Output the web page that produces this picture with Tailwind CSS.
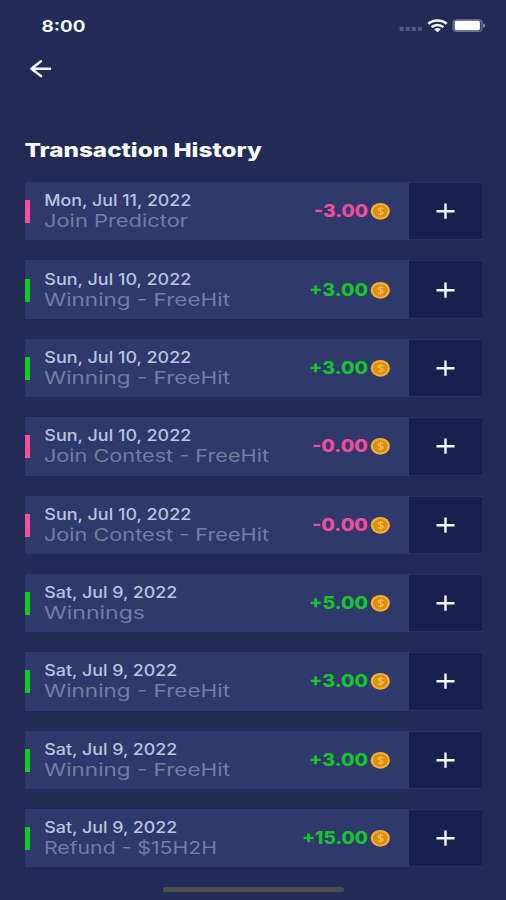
<!DOCTYPE html>
<html lang="en">
<head>
<meta charset="utf-8">
<title>Transaction History</title>
<script src="https://cdn.jsdelivr.net/npm/@tailwindcss/browser@4"></script>
</head>
<body class="bg-[#232a56] font-['Inter',sans-serif]">
<main class="flex h-[900px] w-[506px] flex-col overflow-hidden bg-[#232a56]">
  <header class="flex h-[50px] shrink-0 items-start justify-between pt-[14px] pr-[20px] pl-[41px]">
    <svg class="h-6 w-12 overflow-visible" fill="#f4f5fb"><text x="0.5" y="17.5" font-size="16" font-weight="700" textLength="44" lengthAdjust="spacingAndGlyphs">8:00</text></svg>
    <div class="flex h-6 items-center">
      <svg class="mt-[6px] h-1.5 w-6" viewBox="0 0 24 6" fill="#50567f"><rect x="0.5" y="0.8" width="4.2" height="4.2" rx="1"/><rect x="6.6" y="0.8" width="4.2" height="4.2" rx="1"/><rect x="12.7" y="0.8" width="4.2" height="4.2" rx="1"/><rect x="18.8" y="0.8" width="4.2" height="4.2" rx="1"/></svg>
      <svg class="ml-[4px] h-[14px] w-[21px]" viewBox="0 0 21 14" fill="none" stroke="#f6f7fd" stroke-width="2.6"><path d="M1.3 4.8C6.2.4 14.8.4 19.7 4.8"/><path d="M4.6 8.1C7.8 5.2 13.2 5.2 16.4 8.1"/><path d="M7.2 10.2Q10.5 8 13.8 10.2L10.5 13.3Z" fill="#f6f7fd" stroke="none"/></svg>
      <svg class="ml-[4px] h-[14px] w-[34px]" viewBox="0 0 34 14"><rect x="1" y="0.8" width="29" height="11.6" rx="3.5" fill="#3b4169" stroke="#6d7297" stroke-width="1.2"/><rect x="2.7" y="1.8" width="25.2" height="9.4" rx="1.8" fill="#fff"/><path d="M31.3 4.4Q33.2 5.2 33.2 6.6T31.3 8.8Z" fill="#9a9eb9"/></svg>
    </div>
  </header>
  <nav class="flex h-[38px] shrink-0 items-center pl-[29px]">
    <svg class="h-[20px] w-[24px]" viewBox="0 0 24 20" fill="none" stroke="#f6f7fd" stroke-width="2.5" stroke-linecap="round" stroke-linejoin="round"><path d="M12 2.3L2.3 9.8L12 17.1M2.8 9.8H21"/></svg>
  </nav>
  <h1 class="mt-[48px] flex h-[46px] shrink-0 pl-[25px]">
    <svg class="h-[30px] w-[240px] overflow-visible" fill="#fff"><text x="-0.5" y="21.2" font-size="19" font-weight="800" textLength="237.5" lengthAdjust="spacingAndGlyphs">Transaction History</text></svg>
  </h1>
  <section id="list" class="flex h-[686px] shrink-0 flex-col gap-[20px] pr-[24px] pl-[25px]"></section>
  <footer class="flex grow justify-center pt-[19px]"><div class="h-[5px] w-[181px] rounded-full bg-[#4d4d50]"></div></footer>
</main>
<script>
// date, date width, description, description width, amount, amount width
const rows = [
  ['Mon, Jul 11, 2022', 147, 'Join Predictor', 144, '-3.00', 54],
  ['Sun, Jul 10, 2022', 147, 'Winning - FreeHit', 186, '+3.00', 59],
  ['Sun, Jul 10, 2022', 147, 'Winning - FreeHit', 186, '+3.00', 59],
  ['Sun, Jul 10, 2022', 147, 'Join Contest - FreeHit', 225, '-0.00', 56],
  ['Sun, Jul 10, 2022', 147, 'Join Contest - FreeHit', 225, '-0.00', 56],
  ['Sat, Jul 9, 2022', 133, 'Winnings', 101, '+5.00', 59],
  ['Sat, Jul 9, 2022', 133, 'Winning - FreeHit', 186, '+3.00', 59],
  ['Sat, Jul 9, 2022', 133, 'Winning - FreeHit', 186, '+3.00', 59],
  ['Sat, Jul 9, 2022', 133, 'Refund - $15H2H', 173, '+15.00', 66]
];
document.getElementById('list').innerHTML = rows.map(([date, dw, desc, sw, amount, aw]) => {
  const out = amount[0] === '-';
  return `<article class="flex h-[58.375px] shrink-0 items-stretch">
    <div class="flex w-[384px] items-center bg-[#30396c]">
      <div class="mt-px h-[23px] w-[5.4px] ${out ? 'bg-[#ff4f9b]' : 'bg-[#08cf19]'}"></div>
      <svg class="ml-[13.6px] h-[58px] w-[230px] shrink-0 overflow-visible">
        <text x="0.3" y="24.1" font-size="15.3" font-weight="500" fill="#bac3df" textLength="${dw}" lengthAdjust="spacingAndGlyphs">${date}</text>
        <text x="0" y="45.3" font-size="17" font-weight="400" fill="#747da2" textLength="${sw}" lengthAdjust="spacingAndGlyphs">${desc}</text>
      </svg>
      <svg class="ml-auto h-[58px] w-[70px] shrink-0 overflow-visible">
        <text x="${69 - aw}" y="35.2" font-size="17" font-weight="800" fill="${out ? '#f14f9c' : '#16c52b'}" textLength="${aw}" lengthAdjust="spacingAndGlyphs">${amount}</text>
      </svg>
      <svg class="mr-[18.5px] ml-[1px] h-[18px] w-[21px] shrink-0 overflow-visible" viewBox="0 0 21 18">
        <ellipse cx="10.3" cy="9.3" rx="9.6" ry="8.4" fill="#f3b035"/><ellipse cx="10.3" cy="9.3" rx="7.3" ry="6.3" fill="#dc8c0e"/>
        <path d="M13.3 6.9Q10.4 5.3 8.3 6.7C7 9 13.8 8.5 13.1 11.1C11.9 13.1 8.9 12.4 7.7 11.5M10.5 4.8V13.8" fill="none" stroke="#f7bd45" stroke-width="1.3"/>
      </svg>
    </div>
    <div class="flex w-[73px] items-center justify-center border-y border-[#2b3364] bg-[#192050]">
      <svg class="h-[18px] w-[20px]" viewBox="0 0 20 18" fill="none" stroke="#fafbff" stroke-width="2.4"><path d="M0.5 9.2H18.5M9.5 1.5V16.8"/></svg>
    </div>
  </article>`;
}).join('');
</script>
</body>
</html>
